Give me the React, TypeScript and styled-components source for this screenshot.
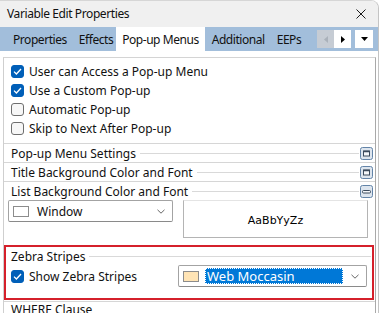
import React from "react";
import styled, { createGlobalStyle } from "styled-components";

const Global = createGlobalStyle`
  html, body { margin: 0; padding: 0; background: #ffffff; }
  body {
    font-family: "Segoe UI", "Noto Sans", "Open Sans", sans-serif;
    font-size: 12px;
    color: #111111;
  }
  * { box-sizing: border-box; }
`;

const Window = styled.div`
  width: 379px;
  height: 313px;
  overflow: hidden;
  background: #ffffff;
  border-right: 1px solid #c4c4c4;
  border-top: 1px solid #d6d6d6;
  border-top-right-radius: 8px;
  display: flex;
  flex-direction: column;
`;

const TitleBar = styled.div`
  height: 26px;
  flex: none;
  background: #f0f0f0;
  display: flex;
  align-items: center;
  justify-content: space-between;
  padding: 0 12px 0 7px;
  line-height: 16px;
  letter-spacing: -0.4px;
`;

const TabStrip = styled.div`
  height: 24px;
  flex: none;
  background: #a2bedb;
  display: flex;
  align-items: stretch;
  padding-left: 7px;
  letter-spacing: -0.45px;
`;

const Tab = styled.div<{ $active?: boolean }>`
  display: flex;
  align-items: center;
  padding: 0 6px;
  margin: 0 ${(p) => (p.$active ? "1px 0 -3px" : "0")};
  background: ${(p) => (p.$active ? "#ffffff" : "transparent")};
  white-space: nowrap;
`;

const Scrollers = styled.div`
  margin-left: auto;
  display: flex;
  align-items: center;
  padding-right: 5px;
`;

const ScrollBtn = styled.div<{ $disabled?: boolean; $gap?: number }>`
  width: ${(p) => (p.$gap ? 18 : 17)}px;
  height: 18px;
  margin-left: ${(p) => p.$gap || 0}px;
  background: ${(p) => (p.$disabled ? "#c6ccd4" : "#ffffff")};
  display: flex;
  align-items: center;
  justify-content: center;
`;

const TabGap = styled.div`
  height: 6px;
  flex: none;
`;

const Panel = styled.div`
  flex: 1;
  margin: 0 2px 0 3px;
  border-top: 1px solid #d4d4d4;
  border-left: 1px solid #cfcfcf;
  border-right: 1px solid #a9a9a9;
  display: flex;
  flex-direction: column;
`;

const CheckGroup = styled.div`
  padding: 4px 0 5px 7px;
  border-bottom: 1px solid #d6d6d6;
`;

const CheckRow = styled.div`
  height: 19px;
  display: flex;
  align-items: center;
  gap: 5px;
  white-space: nowrap;
`;

const Box = styled.span<{ $checked?: boolean }>`
  width: 13px;
  height: 13px;
  flex: none;
  border-radius: 3px;
  display: flex;
  align-items: center;
  justify-content: center;
  background: ${(p) => (p.$checked ? "#005fb8" : "#f7f7f7")};
  border: 1px solid ${(p) => (p.$checked ? "#005fb8" : "#6e6e6e")};
`;

const Header = styled.div<{ $h?: number; $line?: boolean; $top?: boolean; $pl?: number; $pr?: number }>`
  height: ${(p) => p.$h || 19}px;
  flex: none;
  display: flex;
  align-items: center;
  padding: 0 ${(p) => p.$pr ?? 2}px 0 ${(p) => p.$pl ?? 7}px;
  border-bottom: ${(p) => (p.$line ? "1px solid #d6d6d6" : "none")};
  border-top: ${(p) => (p.$top ? "1px solid #d6d6d6" : "none")};
  margin-top: ${(p) => (p.$top ? 1 : 0)}px;
  white-space: nowrap;
`;

const CaptionLine = styled.div`
  flex: 1;
  height: 1px;
  background: #d9d9d9;
  margin: 0 1px 0 4px;
`;

const ListContent = styled.div`
  display: flex;
  align-items: flex-start;
  gap: 10px;
  padding: 0 8px 0 4px;
  height: 45px;
  flex: none;
`;

const Combo = styled.div<{ $w: number }>`
  width: ${(p) => p.$w}px;
  height: 22px;
  flex: none;
  border: 1px solid #a3a3a3;
  border-bottom-color: #8a8a8a;
  border-radius: 2px;
  background: #ffffff;
  display: flex;
  align-items: center;
  padding: 0 7px 0 4px;
`;

const Swatch = styled.span<{ $color: string }>`
  width: 16px;
  height: 11px;
  flex: none;
  background: ${(p) => p.$color};
  border: 1px solid #8c8c8c;
`;

const ComboText = styled.span<{ $selected?: boolean }>`
  flex: 1;
  display: flex;
  align-items: center;
  height: 16px;
  margin-left: ${(p) => (p.$selected ? 6 : 8)}px;
  margin-right: ${(p) => (p.$selected ? 8 : 0)}px;
  padding-left: ${(p) => (p.$selected ? 2 : 0)}px;
  background: ${(p) => (p.$selected ? "#0078d7" : "transparent")};
  color: ${(p) => (p.$selected ? "#ffffff" : "#111111")};
  outline: ${(p) => (p.$selected ? "1px dotted #ffffff" : "none")};
  outline-offset: -1px;
  white-space: nowrap;
  font-size: ${(p) => (p.$selected ? 13 : 12)}px;
`;

const Sample = styled.div`
  width: 185px;
  height: 38px;
  flex: none;
  border: 1px solid #b4b4b4;
  border-top-color: #e4e4e4;
  display: flex;
  align-items: center;
  justify-content: center;
  padding-top: 2px;
  font-family: "DejaVu Sans", sans-serif;
  font-size: 11px;
  color: #000;
`;

const Highlight = styled.div`
  margin: 0 1px 0 0;
  height: 55px;
  flex: none;
  border: 2px solid #d5202b;
  display: flex;
  flex-direction: column;
`;

const ZebraRow = styled.div`
  height: 22px;
  display: flex;
  align-items: center;
  padding: 0 5px;
`;

const ZebraCheck = styled.div`
  flex: 1;
  display: flex;
  align-items: center;
  gap: 5px;
`;

const Check = () => (
  <svg width="9" height="7" viewBox="0 0 9 7">
    <polyline points="1,3.6 3.4,6 8,1" fill="none" stroke="#ffffff" strokeWidth="1.3" />
  </svg>
);

const Chevron = () => (
  <svg width="8" height="5" viewBox="0 0 8 5">
    <polyline points="0.5,0.8 4,4.2 7.5,0.8" fill="none" stroke="#666" strokeWidth="1" />
  </svg>
);

const ToggleBtn = ({ open }: { open?: boolean }) => (
  <svg width="13" height="13" viewBox="0 0 13 13" style={{ flex: "none" }}>
    <rect x="0.5" y="0.5" width="12" height="12" rx="2" fill="#dde5ee" stroke="#6384a8" />
    {open ? (
      <rect x="2.5" y="5.5" width="8" height="2.5" rx="1" fill="#f5f7fa" stroke="#3b4a5c" />
    ) : (
      <>
        <rect x="3.5" y="4" width="6" height="5" fill="#f5f7fa" stroke="#3b4a5c" />
        <line x1="3.5" y1="4.5" x2="9.5" y2="4.5" stroke="#3b4a5c" strokeWidth="1.5" />
      </>
    )}
  </svg>
);

const CheckItem = ({ checked, label }: { checked?: boolean; label: string }) => (
  <CheckRow>
    <Box $checked={checked}>{checked && <Check />}</Box>
    <span>{label}</span>
  </CheckRow>
);

export default function App() {
  return (
    <>
      <Global />
      <Window>
        <TitleBar>
          <span>Variable Edit Properties</span>
          <svg width="10" height="10" viewBox="0 0 10 10">
            <path d="M0.5 0.5 L9.5 9.5 M9.5 0.5 L0.5 9.5" stroke="#1a1a1a" strokeWidth="1" />
          </svg>
        </TitleBar>
        <TabStrip>
          <Tab>Properties</Tab>
          <Tab>Effects</Tab>
          <Tab $active>Pop-up Menus</Tab>
          <Tab>Additional</Tab>
          <Tab>EEPs</Tab>
          <Scrollers>
            <ScrollBtn $disabled>
              <svg width="4" height="7" viewBox="0 0 4 7">
                <polygon points="4,0 0,3.5 4,7" fill="#aab1ba" />
              </svg>
            </ScrollBtn>
            <ScrollBtn>
              <svg width="4" height="7" viewBox="0 0 4 7">
                <polygon points="0,0 4,3.5 0,7" fill="#000" />
              </svg>
            </ScrollBtn>
            <ScrollBtn $gap={4}>
              <svg width="7" height="4" viewBox="0 0 7 4">
                <polygon points="0,0 7,0 3.5,4" fill="#000" />
              </svg>
            </ScrollBtn>
          </Scrollers>
        </TabStrip>
        <TabGap />
        <Panel>
          <CheckGroup>
            <CheckItem checked label="User can Access a Pop-up Menu" />
            <CheckItem checked label="Use a Custom Pop-up" />
            <CheckItem label="Automatic Pop-up" />
            <CheckItem label="Skip to Next After Pop-up" />
          </CheckGroup>
          <Header $line>
            <span>Pop-up Menu Settings</span>
            <CaptionLine />
            <ToggleBtn />
          </Header>
          <Header $line>
            <span>Title Background Color and Font</span>
            <CaptionLine />
            <ToggleBtn />
          </Header>
          <Header $h={18}>
            <span>List Background Color and Font</span>
            <CaptionLine />
            <ToggleBtn open />
          </Header>
          <ListContent>
            <Combo $w={165}>
              <Swatch $color="#ffffff" />
              <ComboText>Window</ComboText>
              <Chevron />
            </Combo>
            <Sample>AaBbYyZz</Sample>
          </ListContent>
          <Highlight>
            <Header $h={18} $pl={5} $pr={0}>
              <span>Zebra Stripes</span>
              <CaptionLine />
            </Header>
            <ZebraRow>
              <ZebraCheck>
                <Box $checked>
                  <Check />
                </Box>
                <span>Show Zebra Stripes</span>
              </ZebraCheck>
              <Combo $w={189}>
                <Swatch $color="#ffe4b5" />
                <ComboText $selected>Web Moccasin</ComboText>
                <Chevron />
              </Combo>
            </ZebraRow>
          </Highlight>
          <Header $h={16} $top>
            <span>WHERE Clause</span>
          </Header>
        </Panel>
      </Window>
    </>
  );
}
